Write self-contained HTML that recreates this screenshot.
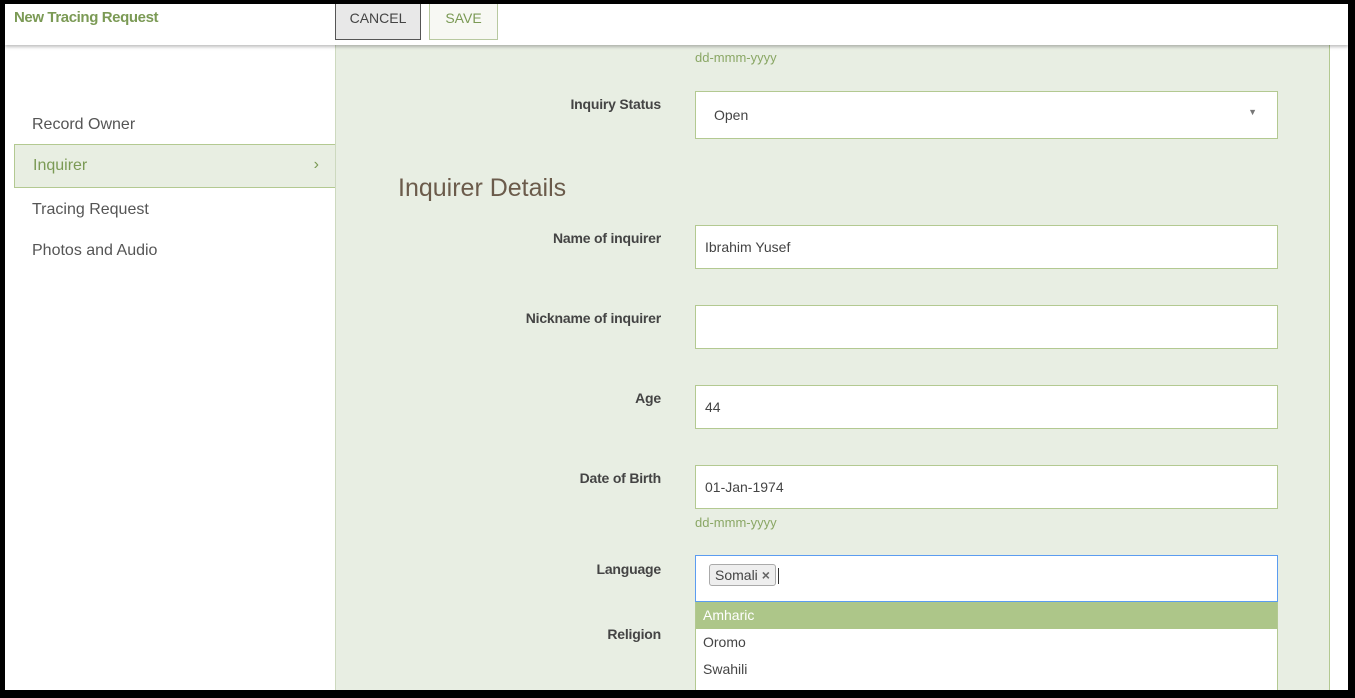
<!DOCTYPE html>
<html><head><meta charset="utf-8"><style>
*{box-sizing:border-box;margin:0;padding:0}
body{width:1355px;height:698px;background:#000;position:relative;overflow:hidden;font-family:"Liberation Sans",sans-serif}
#page{position:absolute;left:5px;top:4px;width:1343px;height:686px;background:#fff;overflow:hidden}
.hdr{position:absolute;left:0;top:0;width:1343px;height:41px;background:#fff;box-shadow:0 2px 3px rgba(0,0,0,.25);z-index:5}
.title{position:absolute;left:9px;top:5px;color:#7b9a55;font-size:15px;font-weight:bold;letter-spacing:-.4px}
.btn{position:absolute;top:-2px;height:38px;font-size:14px;text-align:center;line-height:30px}
.cancel{left:330px;width:86px;background:#e8e8e8;border:1px solid #555;color:#444}
.save{left:424px;width:69px;background:#f7f8f3;border:1px solid #b8c9a0;color:#7b9a55}
.side{position:absolute;left:0;top:41px;width:331px;height:650px;background:#fff}
.nav{position:absolute;left:27px;font-size:16px;color:#555}
.active{position:absolute;left:9px;top:140px;width:322px;height:44px;background:#e8eee2;border:1px solid #b3c991}
.active span{position:absolute;left:18px;top:12px;font-size:16px;color:#7b9a55}
.active i{position:absolute;right:16px;top:11px;font-style:normal;color:#7b9a55;font-size:16px}
.main{position:absolute;left:330px;top:41px;width:995px;height:650px;background:#e8eee3;border-left:1px solid #cdd9bf;border-right:1px solid #b3c991}
.lbl{position:absolute;right:668px;font-size:14px;font-weight:bold;color:#444;letter-spacing:-.2px}
.inp{position:absolute;left:359px;width:583px;height:44px;background:#fff;border:1px solid #b3c991;font-size:14px;color:#444;padding:13px 9px}
.hint{position:absolute;left:359px;font-size:13px;color:#8aa765}
h2{position:absolute;left:62px;top:129px;font-weight:normal;font-size:25px;color:#6b5b4b}
.dd{position:absolute;left:359px;top:557px;width:583px;height:100px;background:#fff;border:1px solid #b3c991;border-top:none;font-size:14px;color:#444}
.dd div{height:27px;line-height:27px;padding-left:7px}
</style></head><body><div id="page">
<div class="hdr"><div class="title">New Tracing Request</div>
<div class="btn cancel">CANCEL</div><div class="btn save">SAVE</div></div>
<div class="side">
<div class="nav" style="top:71px">Record Owner</div>
<div class="active" style="top:99px"><span>Inquirer</span><i>›</i></div>
<div class="nav" style="top:156px">Tracing Request</div>
<div class="nav" style="top:197px">Photos and Audio</div>
</div>
<div class="main">
<div class="hint" style="top:5px">dd-mmm-yyyy</div>
<div class="lbl" style="top:51px">Inquiry Status</div>
<div class="inp" style="top:46px;padding-left:18px;padding-top:15px;height:48px">Open<span style="position:absolute;right:20px;top:15px;font-size:9px;color:#777">▼</span></div>
<h2>Inquirer Details</h2>
<div class="lbl" style="top:185px">Name of inquirer</div>
<div class="inp" style="top:180px">Ibrahim Yusef</div>
<div class="lbl" style="top:265px">Nickname of inquirer</div>
<div class="inp" style="top:260px"></div>
<div class="lbl" style="top:345px">Age</div>
<div class="inp" style="top:340px">44</div>
<div class="lbl" style="top:425px">Date of Birth</div>
<div class="inp" style="top:420px">01-Jan-1974</div>
<div class="hint" style="top:470px">dd-mmm-yyyy</div>
<div class="lbl" style="top:516px">Language</div>
<div class="inp" style="top:510px;height:47px;border:1px solid #5b9cf0;padding:8px 13px"><span style="display:inline-block;border:1px solid #aaa;border-radius:3px;background:#eee;padding:2px 5px;font-size:14px">Somali <b style="color:#666">×</b></span><span style="display:inline-block;width:1px;height:16px;background:#333;vertical-align:middle;margin-left:2px"></span></div>
<div class="lbl" style="top:581px">Religion</div>
<div class="dd"><div style="background:#adc689;color:#fff">Amharic</div><div>Oromo</div><div>Swahili</div><div>Arabic</div></div>
</div>
</div></body></html>
